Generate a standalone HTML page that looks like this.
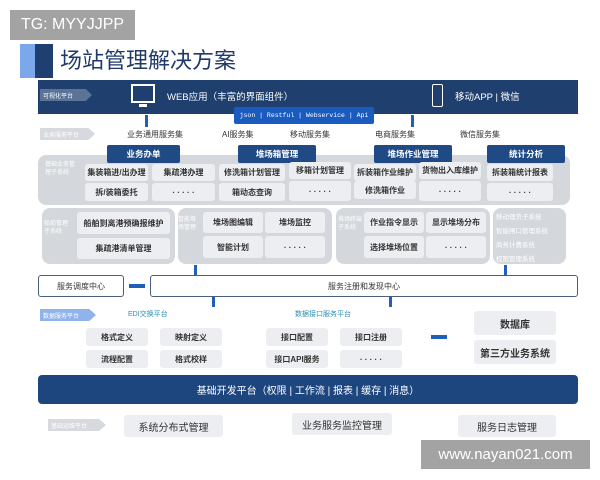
<!DOCTYPE html>
<html><head><meta charset="utf-8"><style>
*{margin:0;padding:0;box-sizing:border-box}
body{width:600px;height:480px;background:#fff;position:relative;overflow:hidden;font-family:"Liberation Sans","Noto Sans CJK SC",sans-serif;color:#333}
.a{position:absolute}
.c{display:flex;align-items:center;justify-content:center;text-align:center}
.cell{background:#eceef1;border-radius:3px;font-size:8px;color:#333;font-weight:bold}
.gp{background:#d4d7dc;border-radius:8px}
.tab{background:#1f4a86;color:#fff;font-size:8.5px;font-weight:bold;border-radius:2px}
.lbl{font-size:6px;color:#fff;line-height:8px}
.arr{background:#1f5fb8;width:3px}
.tag{height:12px;color:#fff;font-size:6px;clip-path:polygon(0 0,88% 0,100% 50%,88% 100%,0 100%);padding-left:3px;display:flex;align-items:center}
</style></head><body>
<div class="a c" style="left:10px;top:10px;width:125px;height:30px;background:#a3a3a3;color:#fff;font-size:16px">TG: MYYJJPP</div>
<div class="a" style="left:20px;top:44px;width:15px;height:34px;background:#7aa8ea"></div>
<div class="a" style="left:35px;top:44px;width:18px;height:34px;background:#1f3f70"></div>
<div class="a" style="left:60px;top:47px;font-size:22px;color:#1f3a6a;line-height:28px">场站管理解决方案</div>

<div class="a" style="left:38px;top:80px;width:540px;height:34px;background:#1f3f6e"></div>
<div class="a tag" style="left:40px;top:89px;width:52px;background:#5a7396">可视化平台</div>
<div class="a" style="left:131px;top:84px;width:24px;height:19px;border:2px solid #fff"></div>
<div class="a" style="left:139px;top:104px;width:8px;height:3px;background:#fff"></div>
<div class="a" style="left:167px;top:89px;color:#fff;font-size:9.5px">WEB应用（丰富的界面组件）</div>
<div class="a" style="left:432px;top:84px;width:11px;height:23px;border:1.5px solid #fff;border-radius:2px"></div>
<div class="a" style="left:455px;top:89px;color:#fff;font-size:9.5px">移动APP | 微信</div>
<div class="a c" style="left:234px;top:107px;width:140px;height:17px;background:#1a5bbf;color:#fff;font-size:6.5px;font-family:'Liberation Mono',monospace;border-radius:2px">json | Restful | Webservice | Api</div>
<div class="a arr" style="left:145px;top:115px;height:12px"></div>
<div class="a arr" style="left:411px;top:115px;height:12px"></div>

<div class="a tag" style="left:40px;top:128px;width:55px;background:#d6d9de">业务服务平台</div>
<div class="a" style="left:127px;top:129px;font-size:8px">业务通用服务集</div>
<div class="a" style="left:222px;top:129px;font-size:8px">AI服务集</div>
<div class="a" style="left:290px;top:129px;font-size:8px">移动服务集</div>
<div class="a" style="left:375px;top:129px;font-size:8px">电商服务集</div>
<div class="a" style="left:460px;top:129px;font-size:8px">微信服务集</div>

<div class="a gp" style="left:38px;top:155px;width:532px;height:50px"></div>
<div class="a lbl" style="left:45px;top:161px;width:32px">基础业务管理子系统</div>
<div class="a tab c" style="left:107px;top:145px;width:73px;height:18px">业务办单</div>
<div class="a tab c" style="left:238px;top:145px;width:78px;height:18px">堆场箱管理</div>
<div class="a tab c" style="left:374px;top:145px;width:78px;height:18px">堆场作业管理</div>
<div class="a tab c" style="left:487px;top:145px;width:78px;height:18px">统计分析</div>
<div class="a cell c" style="left:85px;top:164px;width:63px;height:17px">集装箱进/出办理</div>
<div class="a cell c" style="left:152px;top:164px;width:63px;height:17px">集疏港办理</div>
<div class="a cell c" style="left:219px;top:164px;width:66px;height:17px">修洗箱计划管理</div>
<div class="a cell c" style="left:289px;top:162px;width:62px;height:17px">移箱计划管理</div>
<div class="a cell c" style="left:354px;top:164px;width:62px;height:17px">拆装箱作业维护</div>
<div class="a cell c" style="left:419px;top:162px;width:62px;height:17px">货物出入库维护</div>
<div class="a cell c" style="left:487px;top:164px;width:66px;height:17px">拆装箱统计报表</div>
<div class="a cell c" style="left:85px;top:183px;width:63px;height:18px">拆/装箱委托</div>
<div class="a cell c" style="left:152px;top:183px;width:63px;height:18px">· · · · ·</div>
<div class="a cell c" style="left:219px;top:183px;width:66px;height:18px">箱动态查询</div>
<div class="a cell c" style="left:289px;top:181px;width:62px;height:20px">· · · · ·</div>
<div class="a cell c" style="left:354px;top:181px;width:62px;height:18px">修洗箱作业</div>
<div class="a cell c" style="left:419px;top:181px;width:62px;height:20px">· · · · ·</div>
<div class="a cell c" style="left:487px;top:183px;width:66px;height:18px">· · · · ·</div>

<div class="a gp" style="left:42px;top:208px;width:133px;height:56px"></div>
<div class="a lbl" style="left:44px;top:220px;width:28px">船舶管理子系统</div>
<div class="a cell c" style="left:77px;top:212px;width:93px;height:22px">船舶到离港预确报维护</div>
<div class="a cell c" style="left:77px;top:238px;width:93px;height:21px">集疏港清单管理</div>
<div class="a gp" style="left:178px;top:208px;width:154px;height:56px"></div>
<div class="a lbl" style="left:178px;top:216px;width:22px">智能堆场管理</div>
<div class="a cell c" style="left:203px;top:212px;width:60px;height:21px">堆场图编辑</div>
<div class="a cell c" style="left:265px;top:212px;width:60px;height:21px">堆场监控</div>
<div class="a cell c" style="left:203px;top:236px;width:60px;height:22px">智能计划</div>
<div class="a cell c" style="left:265px;top:236px;width:60px;height:22px">· · · · ·</div>
<div class="a gp" style="left:336px;top:208px;width:154px;height:56px"></div>
<div class="a lbl" style="left:338px;top:216px;width:24px">堆场终端子系统</div>
<div class="a cell c" style="left:364px;top:212px;width:60px;height:21px">作业指令显示</div>
<div class="a cell c" style="left:426px;top:212px;width:60px;height:21px">显示堆场分布</div>
<div class="a cell c" style="left:364px;top:236px;width:60px;height:22px">选择堆场位置</div>
<div class="a cell c" style="left:426px;top:236px;width:60px;height:22px">· · · · ·</div>
<div class="a gp" style="left:493px;top:208px;width:73px;height:56px"></div>
<div class="a lbl" style="left:496px;top:211px;line-height:14px;font-size:6.5px">移动理货子系统<br>智能闸口管理系统<br>商务计费系统<br>权限管理系统</div>
<div class="a arr" style="left:194px;top:265px;height:10px"></div>
<div class="a arr" style="left:504px;top:265px;height:10px"></div>

<div class="a c" style="left:38px;top:275px;width:86px;height:22px;border:1px solid #4a5f7e;border-radius:3px;font-size:8px">服务调度中心</div>
<div class="a" style="left:129px;top:284px;width:16px;height:4px;background:#1f5fb8"></div>
<div class="a c" style="left:150px;top:275px;width:428px;height:22px;border:1px solid #4a5f7e;border-radius:3px;font-size:8px">服务注册和发现中心</div>
<div class="a arr" style="left:212px;top:297px;height:10px"></div>
<div class="a arr" style="left:389px;top:297px;height:10px"></div>

<div class="a tag" style="left:40px;top:309px;width:56px;background:#8fb3ea">数据服务平台</div>
<div class="a" style="left:128px;top:309px;font-size:7px;color:#2a8fb0">EDI交换平台</div>
<div class="a" style="left:295px;top:309px;font-size:7px;color:#2a8fb0">数据接口服务平台</div>
<div class="a cell c" style="left:86px;top:328px;width:62px;height:18px">格式定义</div>
<div class="a cell c" style="left:160px;top:328px;width:62px;height:18px">映射定义</div>
<div class="a cell c" style="left:86px;top:350px;width:62px;height:18px">流程配置</div>
<div class="a cell c" style="left:160px;top:350px;width:62px;height:18px">格式校样</div>
<div class="a cell c" style="left:266px;top:328px;width:62px;height:18px">接口配置</div>
<div class="a cell c" style="left:340px;top:328px;width:62px;height:18px">接口注册</div>
<div class="a cell c" style="left:266px;top:350px;width:62px;height:18px">接口API服务</div>
<div class="a cell c" style="left:340px;top:350px;width:62px;height:18px">· · · · ·</div>
<div class="a" style="left:431px;top:335px;width:16px;height:4px;background:#1f5fb8"></div>
<div class="a cell c" style="left:474px;top:311px;width:82px;height:24px;font-size:10px">数据库</div>
<div class="a cell c" style="left:474px;top:340px;width:82px;height:24px;font-size:10px">第三方业务系统</div>

<div class="a c" style="left:38px;top:375px;width:540px;height:29px;background:#1d467f;border-radius:4px;color:#fff;font-size:10px">基础开发平台（权限 | 工作流 | 报表 | 缓存 | 消息）</div>

<div class="a tag" style="left:48px;top:419px;width:58px;background:#d6d9de">基础运维平台</div>
<div class="a cell c" style="left:124px;top:415px;width:99px;height:22px;font-size:10px;font-weight:normal">系统分布式管理</div>
<div class="a cell c" style="left:292px;top:413px;width:100px;height:22px;font-size:10px;font-weight:normal">业务服务监控管理</div>
<div class="a cell c" style="left:458px;top:415px;width:98px;height:22px;font-size:10px;font-weight:normal">服务日志管理</div>
<div class="a c" style="left:421px;top:440px;width:169px;height:29px;background:#a3a3a3;color:#fff;font-size:15px">www.nayan021.com</div>
</body></html>
